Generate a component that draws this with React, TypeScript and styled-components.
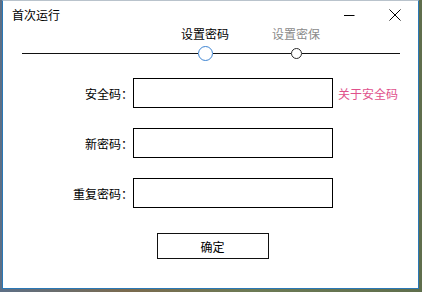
import React from "react";
import styled, { createGlobalStyle } from "styled-components";

const GlobalStyle = createGlobalStyle`
  html, body {
    margin: 0;
    padding: 0;
  }
  body {
    width: 422px;
    height: 292px;
    overflow: hidden;
    background: linear-gradient(90deg, #5d6f86 0%, #7a6a4e 30%, #6c7a55 60%, #5f6e4c 100%);
    font-family: "Noto Sans CJK SC", "Noto Sans", sans-serif;
    font-size: 12px;
    color: #000;
  }
`;

const Window = styled.div`
  box-sizing: border-box;
  width: 417px;
  height: 289px;
  margin-left: 2px;
  background: #fff;
  border: 1px solid #2a78b6;
  border-top-color: #b9c3cc;
  display: flex;
  flex-direction: column;
`;

const TitleBar = styled.div`
  height: 26px;
  display: flex;
  align-items: flex-start;
  padding: 6px 0 0 9px;
  box-sizing: border-box;
`;

const Title = styled.div`
  flex: 1;
  line-height: 16px;
`;

const WinButton = styled.div`
  width: 46px;
  height: 16px;
  display: flex;
  align-items: center;
  justify-content: center;
`;

const Stepper = styled.div`
  display: flex;
  align-items: flex-end;
  padding-left: 19px;
`;

const Segment = styled.div<{ $w: number }>`
  width: ${(p) => p.$w}px;
  height: 1px;
  background: #111;
  margin-bottom: 7px;
`;

const Step = styled.div`
  width: 60px;
  display: flex;
  flex-direction: column;
  align-items: center;
  gap: 5px;
`;

const StepLabel = styled.div<{ $active?: boolean }>`
  line-height: 14px;
  white-space: nowrap;
  color: ${(p) => (p.$active ? "#000" : "#8a8a8a")};
`;

const Track = styled.div`
  height: 15px;
  width: 100%;
  display: flex;
  align-items: center;
`;

const TrackLine = styled.div`
  flex: 1;
  height: 1px;
  background: #111;
`;

const Dot = styled.div<{ $size: number; $color: string; $bw: number }>`
  box-sizing: border-box;
  width: ${(p) => p.$size}px;
  height: ${(p) => p.$size}px;
  border-radius: 50%;
  border: ${(p) => p.$bw}px solid ${(p) => p.$color};
  background: #fff;
`;

const Form = styled.div`
  margin-top: 17px;
  display: flex;
  flex-direction: column;
  gap: 20px;
`;

const Row = styled.div`
  display: flex;
  align-items: center;
`;

const Label = styled.div`
  width: 130px;
  text-align: right;
  white-space: nowrap;
`;

const Input = styled.input`
  box-sizing: border-box;
  width: 200px;
  height: 30px;
  border: 1px solid #000;
  margin: 0;
  padding: 0 4px;
  font: inherit;
  outline: none;
`;

const Link = styled.a`
  margin-left: 5px;
  color: #e0508c;
  text-decoration: none;
  white-space: nowrap;
`;

const Actions = styled.div`
  margin-top: 25px;
  display: flex;
  justify-content: center;
  padding-left: 4px;
`;

const Button = styled.button`
  box-sizing: border-box;
  width: 112px;
  height: 26px;
  border: 1px solid #111;
  background: #fff;
  font: inherit;
  color: #000;
  padding: 0;
`;

const fields = [
  { label: "安全码：", link: "关于安全码" },
  { label: "新密码：" },
  { label: "重复密码：" },
];

export default function App() {
  return (
    <>
      <GlobalStyle />
      <Window>
        <TitleBar>
          <Title>首次运行</Title>
          <WinButton>
            <svg width="11" height="11" viewBox="0 0 11 11">
              <path d="M0 5.5H10.5" stroke="#000" strokeWidth="1" />
            </svg>
          </WinButton>
          <WinButton>
            <svg width="12" height="12" viewBox="0 0 12 12">
              <path d="M0.5 0.5L11.5 11.5M11.5 0.5L0.5 11.5" stroke="#000" strokeWidth="1" />
            </svg>
          </WinButton>
        </TitleBar>

        <Stepper>
          <Segment $w={153} />
          <Step>
            <StepLabel $active>设置密码</StepLabel>
            <Track>
              <TrackLine />
              <Dot $size={15} $color="#3d84d2" $bw={1.5} />
              <TrackLine />
            </Track>
          </Step>
          <Segment $w={31} />
          <Step>
            <StepLabel>设置密保</StepLabel>
            <Track>
              <TrackLine />
              <Dot $size={11} $color="#2a2a2a" $bw={1.2} />
              <TrackLine />
            </Track>
          </Step>
          <Segment $w={74} />
        </Stepper>

        <Form>
          {fields.map((f) => (
            <Row key={f.label}>
              <Label>{f.label}</Label>
              <Input type="password" />
              {f.link && <Link href="#">{f.link}</Link>}
            </Row>
          ))}
        </Form>

        <Actions>
          <Button>确定</Button>
        </Actions>
      </Window>
    </>
  );
}
